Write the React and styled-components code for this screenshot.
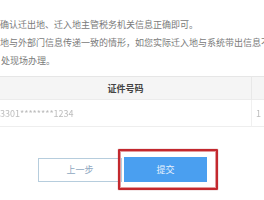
import React from 'react';
import styled, { createGlobalStyle } from 'styled-components';

const GlobalStyle = createGlobalStyle`
   html, body {
      margin: 0;
      padding: 0;
      background: #fff;
      overflow: hidden;
   }
   body {
      font-family: "Noto Sans CJK SC", "Noto Sans", sans-serif;
   }
`;

const Page = styled.div`
   width: 264px;
   height: 200px;
   overflow: hidden;
`;

const Notice = styled.div`
   padding-top: 16px;
   font-size: 9px;
   line-height: 18px;
   color: #7a7a7a;
   white-space: nowrap;
`;

const Line = styled.div`
   padding-left: ${(props) => props.indent || 0}px;
`;

const Table = styled.div`
   margin-top: 6px;
   width: 360px;
   display: grid;
   grid-template-columns: 252px 108px;
   font-size: 9px;
`;

const HeadCell = styled.div`
   height: 24px;
   display: flex;
   align-items: center;
   justify-content: center;
   background: #f5f5f5;
   border-top: 1px solid #e6e6e6;
   border-bottom: 1px solid #ececec;
   border-right: 1px solid #e8e8e8;
   box-sizing: border-box;
   color: #444;
   font-weight: bold;
`;

const Cell = styled.div`
   height: 27px;
   display: flex;
   align-items: center;
   padding-left: ${(props) => props.pad || 0}px;
   border-bottom: 1px solid #eeeeee;
   border-right: 1px solid #f0f0f0;
   box-sizing: border-box;
   color: #bdbdbd;
   filter: blur(0.6px);
`;

const Actions = styled.div`
   margin-top: 22px;
   padding-left: 38px;
   display: flex;
   align-items: center;
`;

const PrevButton = styled.button`
   width: 84px;
   height: 24px;
   padding: 0;
   background: #fff;
   border: 1px solid #b6cddd;
   color: #8ea7bf;
   font-family: inherit;
   font-size: 9px;
`;

const Highlight = styled.div`
   margin-left: -4px;
   padding: 6px 9px 6px 4px;
   border: 2px solid #c3282e;
   box-shadow: inset 0 0 0 1px #e39a9c, 0 0 1px #8a1a1e;
   border-radius: 1px;
`;

const SubmitButton = styled.button`
   display: block;
   width: 83px;
   height: 25px;
   padding: 0;
   border: none;
   background: #4a9ff0;
   color: #e8f2fc;
   font-family: inherit;
   font-size: 9px;
`;

export default function App() {
   return (
      <Page>
         <GlobalStyle />
         <Notice>
            <Line>确认迁出地、迁入地主管税务机关信息正确即可。</Line>
            <Line>地与外部门信息传递一致的情形，如您实际迁入地与系统带出信息不</Line>
            <Line indent={1}>处现场办理。</Line>
         </Notice>
         <Table>
            <HeadCell>证件号码</HeadCell>
            <HeadCell />
            <Cell>3301********1234</Cell>
            <Cell pad={4}>1</Cell>
         </Table>
         <Actions>
            <PrevButton>上一步</PrevButton>
            <Highlight>
               <SubmitButton>提交</SubmitButton>
            </Highlight>
         </Actions>
      </Page>
   );
}
